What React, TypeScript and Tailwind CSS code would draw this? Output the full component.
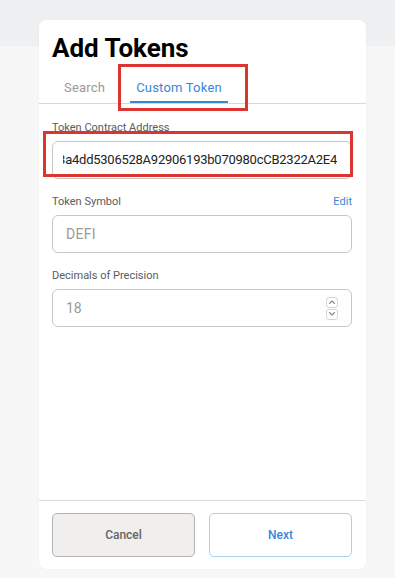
import React from "react";

function Chevron({ up }: { up?: boolean }) {
  return (
    <svg width="8" height="6" viewBox="0 0 8 6" fill="none">
      <path
        d={up ? "M1.5 4.5 L4 2 L6.5 4.5" : "M1.5 1.5 L4 4 L6.5 1.5"}
        stroke="#8a8a8a"
        strokeWidth="1.1"
        strokeLinecap="round"
        strokeLinejoin="round"
      />
    </svg>
  );
}

export default function App() {
  return (
    <div
      className="w-[395px] h-[578px] overflow-hidden bg-[linear-gradient(to_bottom,#eff0f2_46px,#f7f7f7_46px)] pt-[20px] pl-[39px]"
      style={{ fontFamily: "Roboto, 'Noto Sans', sans-serif" }}
    >
      <div className="w-[327px] h-[549px] bg-white rounded-[7px] shadow-[0_0_3px_rgba(0,0,0,0.04)] flex flex-col">
        {/* Header */}
        <div className="pt-[12px] px-[13px]">
          <h1 className="text-[26px] leading-[32px] font-bold text-black">Add Tokens</h1>
        </div>
        <div className="mt-[7px] flex px-[13px] border-b border-[#d8d8d8]">
          <button className="px-[12px] pt-[8px] pb-[6px] text-[13px] leading-[18px] text-[#9a9a9a] tracking-[0.2px]">
            Search
          </button>
          <div className="relative ml-[13px]">
            <button className="px-[6px] pt-[8px] pb-[4px] text-[13px] leading-[18px] text-[#3a86d9] border-b-2 border-[#3a86d9] tracking-[0.2px]">
              Custom Token
            </button>
            <div className="absolute left-[-12px] top-[-7px] w-[130px] h-[47px] border-[3px] border-[#dc3530] pointer-events-none" />
          </div>
        </div>

        {/* Body */}
        <div className="flex-1 px-[13px] pt-[17px] flex flex-col gap-[16px]">
          <div className="relative">
            <div className="text-[11px] leading-[14px] text-[#5b5b5b] mb-[6px]">Token Contract Address</div>
            <div className="h-[38px] w-[300px] rounded-[6px] border border-[#c6c6c6] flex items-center pl-[10px] pr-[14px]">
              <div className="flex-1 min-w-0 overflow-hidden flex justify-end">
                <span className="whitespace-nowrap text-[13px] tracking-[-0.25px] text-[#222]">
                  0x3a4dd5306528A92906193b070980cCB2322A2E4
                </span>
              </div>
            </div>
            <div className="absolute left-[-9px] top-[10px] w-[310px] h-[46px] border-[3px] border-[#dc3530] pointer-events-none" />
          </div>

          <div>
            <div className="flex justify-between text-[11px] leading-[14px] mb-[6px]">
              <span className="text-[#5b5b5b]">Token Symbol</span>
              <span className="text-[#3a86d9] pr-[1px]">Edit</span>
            </div>
            <div className="h-[38px] w-[300px] rounded-[6px] border border-[#c6c6c6] flex items-center px-[13px]">
              <span className="text-[14px] text-[#9b9b9b] tracking-[0.3px]">DEFI</span>
            </div>
          </div>

          <div>
            <div className="text-[11px] leading-[14px] text-[#5b5b5b] mb-[6px]">Decimals of Precision</div>
            <div className="h-[38px] w-[300px] rounded-[6px] border border-[#c6c6c6] flex items-center justify-between pl-[13px] pr-[13px]">
              <span className="text-[14px] text-[#9b9b9b]">18</span>
              <div className="flex flex-col gap-[1px]">
                <div className="w-[12px] h-[11px] rounded-[3px] border border-[#d4d4d4] flex items-center justify-center">
                  <Chevron up />
                </div>
                <div className="w-[12px] h-[11px] rounded-[3px] border border-[#d4d4d4] flex items-center justify-center">
                  <Chevron />
                </div>
              </div>
            </div>
          </div>
        </div>

        {/* Footer */}
        <div className="border-t border-[#d5dde5] px-[13px] pt-[12px] pb-[12px] flex gap-[14px]">
          <button className="w-[143px] h-[44px] rounded-[5px] bg-[#f0efee] border border-[#b3b3b3] text-[12px] font-medium text-[#666]">
            Cancel
          </button>
          <button className="w-[143px] h-[44px] rounded-[5px] bg-white border border-[#a9d1f2] text-[12px] font-medium text-[#3a86d9]">
            Next
          </button>
        </div>
      </div>
    </div>
  );
}
